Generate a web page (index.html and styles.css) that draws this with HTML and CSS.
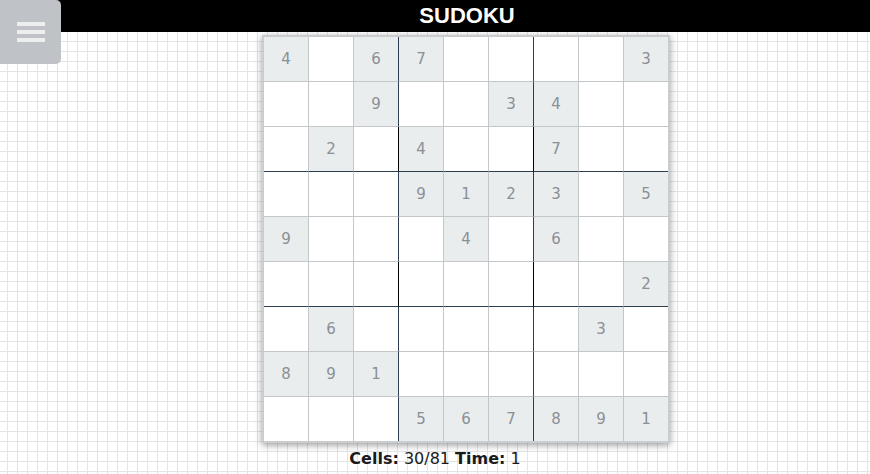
FILE: index.html
```html
<!DOCTYPE html>
<html lang="en">
<head>
<meta charset="utf-8">
<title>Sudoku</title>
<link rel="stylesheet" href="styles.css">
</head>
<body>
<button class="menu-btn" aria-label="Menu">
  <span class="bar"></span><span class="bar"></span><span class="bar"></span>
</button>
<header class="topbar"><h1 class="title">SUDOKU</h1></header>
<main class="main">
  <div class="board">
    <div class="cell given">4</div><div class="cell"></div><div class="cell given">6</div><div class="cell given">7</div><div class="cell"></div><div class="cell"></div><div class="cell"></div><div class="cell"></div><div class="cell given">3</div>
    <div class="cell"></div><div class="cell"></div><div class="cell given">9</div><div class="cell"></div><div class="cell"></div><div class="cell given">3</div><div class="cell given">4</div><div class="cell"></div><div class="cell"></div>
    <div class="cell"></div><div class="cell given">2</div><div class="cell dark-r dark-b"></div><div class="cell given">4</div><div class="cell dark-b"></div><div class="cell dark-r dark-b"></div><div class="cell given">7</div><div class="cell"></div><div class="cell"></div>
    <div class="cell"></div><div class="cell"></div><div class="cell"></div><div class="cell given">9</div><div class="cell given">1</div><div class="cell given">2</div><div class="cell given">3</div><div class="cell"></div><div class="cell given">5</div>
    <div class="cell given">9</div><div class="cell"></div><div class="cell"></div><div class="cell"></div><div class="cell given">4</div><div class="cell"></div><div class="cell given">6</div><div class="cell"></div><div class="cell"></div>
    <div class="cell"></div><div class="cell"></div><div class="cell dark-r dark-b"></div><div class="cell dark-b"></div><div class="cell dark-b"></div><div class="cell dark-r dark-b"></div><div class="cell"></div><div class="cell"></div><div class="cell given">2</div>
    <div class="cell"></div><div class="cell given">6</div><div class="cell"></div><div class="cell"></div><div class="cell"></div><div class="cell"></div><div class="cell"></div><div class="cell given">3</div><div class="cell"></div>
    <div class="cell given">8</div><div class="cell given">9</div><div class="cell given">1</div><div class="cell"></div><div class="cell"></div><div class="cell"></div><div class="cell"></div><div class="cell"></div><div class="cell"></div>
    <div class="cell"></div><div class="cell"></div><div class="cell"></div><div class="cell given">5</div><div class="cell given">6</div><div class="cell given">7</div><div class="cell given">8</div><div class="cell given">9</div><div class="cell given">1</div>
  </div>
</main>
<footer class="status"><b>Cells:</b> 30/81 <b>Time:</b> 1</footer>
</body>
</html>
```
FILE: styles.css
```css
html, body {
  margin: 0;
  padding: 0;
}
body {
  font-family: "DejaVu Sans", Verdana, sans-serif;
  color: #222;
  background-color: #fff;
  background-image:
    linear-gradient(to right, #e4e4e4 1px, transparent 1px),
    linear-gradient(to bottom, #e4e4e4 1px, transparent 1px);
  background-size: 10px 10px;
  background-position: 7px 1px;
  min-height: 474px;
}
.menu-btn {
  position: absolute;
  top: 0;
  left: 0;
  width: 61px;
  height: 64px;
  margin: 0;
  padding: 0;
  border: 0;
  border-radius: 0 5px 5px 0;
  background: #bfc3c7;
  display: flex;
  flex-direction: column;
  align-items: center;
  justify-content: center;
  gap: 4.5px;
}
.menu-btn .bar {
  display: block;
  width: 28px;
  height: 3.5px;
  background: #eceef0;
}
.topbar {
  height: 32px;
  background: #000;
  display: flex;
  justify-content: center;
  padding-left: 64px;
}
.title {
  margin: 0;
  font-family: "Liberation Sans", Arial, sans-serif;
  font-weight: bold;
  font-size: 22px;
  line-height: 32px;
  color: #fff;
}
.main {
  display: flex;
  justify-content: center;
  padding-left: 62px;
  margin-top: 3px;
}
.board {
  display: grid;
  grid-template-columns: repeat(8, 45px) 44px;
  grid-template-rows: repeat(8, 45px) 44px;
  border: 2px solid #c9cdd0;
  background: #fff;
  box-shadow: 0 2px 7px rgba(0, 0, 0, 0.4);
}
.cell {
  box-sizing: border-box;
  border-right: 1px solid #c3c7ca;
  border-bottom: 1px solid #c3c7ca;
  display: flex;
  align-items: center;
  justify-content: center;
  font-size: 15px;
  color: #8b9094;
  background: #fff;
}
.cell.given {
  background: #e9edee;
}
.cell:nth-child(9n+3),
.cell:nth-child(9n+6) {
  border-right-color: #2c3e50;
}
.cell:nth-child(n+19):nth-child(-n+27),
.cell:nth-child(n+46):nth-child(-n+54) {
  border-bottom-color: #2c3e50;
}
.cell:nth-child(9n) {
  border-right: 0;
}
.cell:nth-child(n+73) {
  border-bottom: 0;
}
.cell.dark-r {
  border-right-color: #000;
}
.cell.dark-b {
  border-bottom-color: #000;
}
.status {
  margin-top: 6px;
  text-align: center;
  font-size: 16px;
  color: #1a1a1a;
}
```
